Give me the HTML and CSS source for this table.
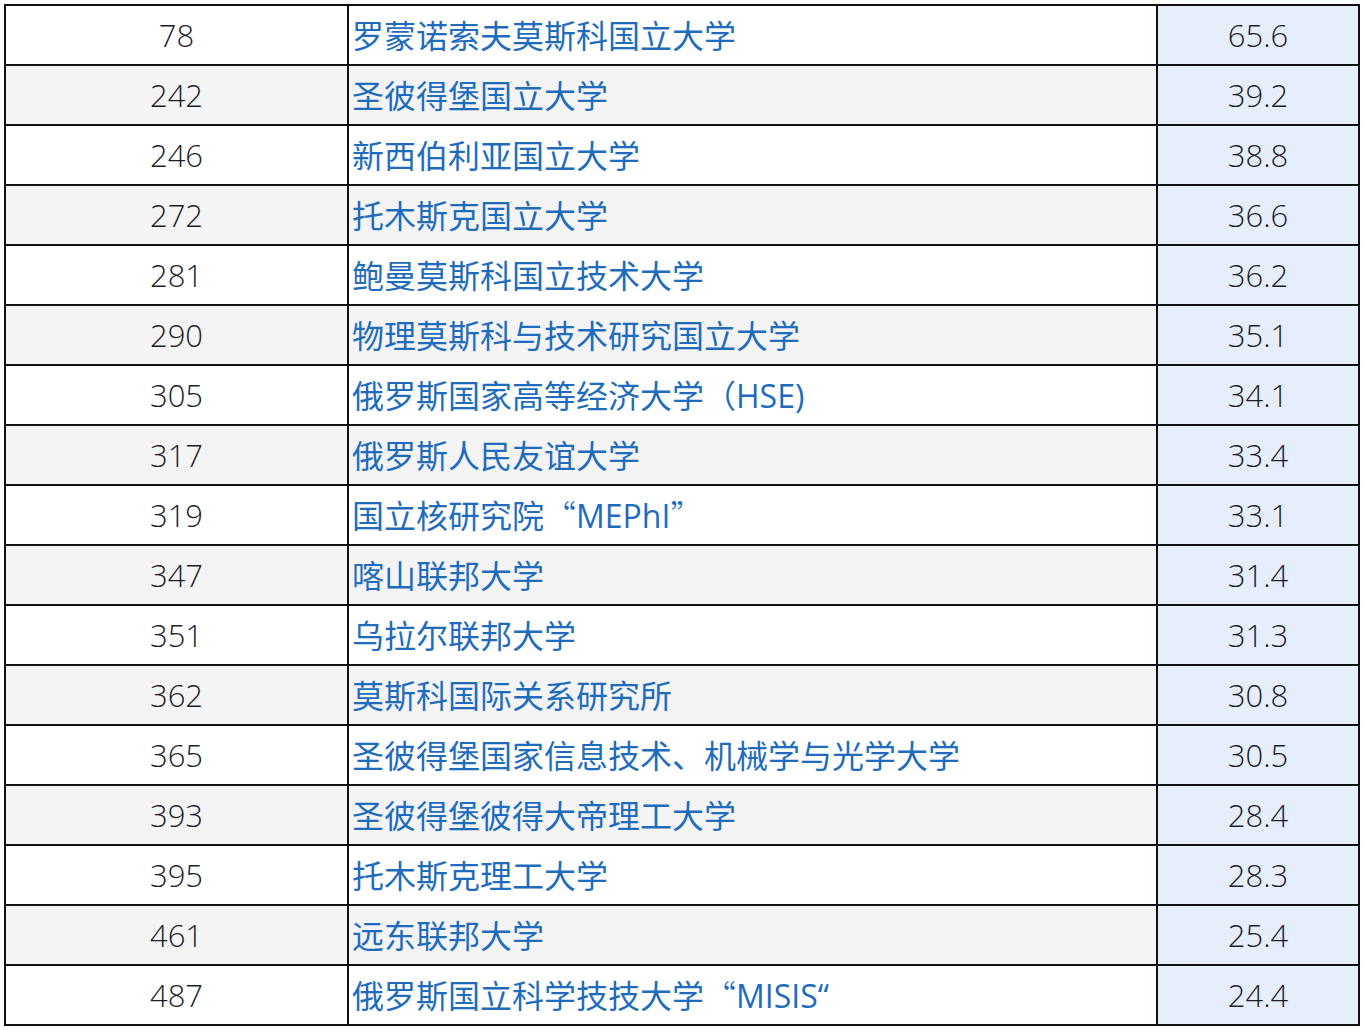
FILE: index.html
```html
<!DOCTYPE html>
<html lang="zh">
<head>
<meta charset="utf-8">
<title>排名</title>
<link rel="stylesheet" href="styles.css">
</head>
<body>
<table class="rank">
  <colgroup><col class="c1"><col class="c2"><col class="c3"></colgroup>
  <tbody>
    <tr><td class="num">78</td><td class="name">罗蒙诺索夫莫斯科国立大学</td><td class="score">65.6</td></tr>
    <tr><td class="num">242</td><td class="name">圣彼得堡国立大学</td><td class="score">39.2</td></tr>
    <tr><td class="num">246</td><td class="name">新西伯利亚国立大学</td><td class="score">38.8</td></tr>
    <tr><td class="num">272</td><td class="name">托木斯克国立大学</td><td class="score">36.6</td></tr>
    <tr><td class="num">281</td><td class="name">鲍曼莫斯科国立技术大学</td><td class="score">36.2</td></tr>
    <tr><td class="num">290</td><td class="name">物理莫斯科与技术研究国立大学</td><td class="score">35.1</td></tr>
    <tr><td class="num">305</td><td class="name">俄罗斯国家高等经济大学（HSE)</td><td class="score">34.1</td></tr>
    <tr><td class="num">317</td><td class="name">俄罗斯人民友谊大学</td><td class="score">33.4</td></tr>
    <tr><td class="num">319</td><td class="name">国立核研究院<span class="q">“</span>MEPhI<span class="q">”</span></td><td class="score">33.1</td></tr>
    <tr><td class="num">347</td><td class="name">喀山联邦大学</td><td class="score">31.4</td></tr>
    <tr><td class="num">351</td><td class="name">乌拉尔联邦大学</td><td class="score">31.3</td></tr>
    <tr><td class="num">362</td><td class="name">莫斯科国际关系研究所</td><td class="score">30.8</td></tr>
    <tr><td class="num">365</td><td class="name">圣彼得堡国家信息技术、机械学与光学大学</td><td class="score">30.5</td></tr>
    <tr><td class="num">393</td><td class="name">圣彼得堡彼得大帝理工大学</td><td class="score">28.4</td></tr>
    <tr><td class="num">395</td><td class="name">托木斯克理工大学</td><td class="score">28.3</td></tr>
    <tr><td class="num">461</td><td class="name">远东联邦大学</td><td class="score">25.4</td></tr>
    <tr><td class="num">487</td><td class="name">俄罗斯国立科学技技大学<span class="q">“</span>MISIS“</td><td class="score">24.4</td></tr>
  </tbody>
</table>
</body>
</html>
```
FILE: styles.css
```css
html, body {
  margin: 0;
  padding: 0;
  background: #ffffff;
}
body {
  padding: 4px 0 0 4px;
  font-family: "Open Sans", "Noto Sans CJK SC", sans-serif;
}
.rank {
  border-collapse: collapse;
  table-layout: fixed;
  width: 1354px;
}
.c1 { width: 343px; }
.c2 { width: 809px; }
.c3 { width: 202px; }
.rank td {
  border: 2px solid #111111;
  height: 57px;
  padding: 1px 0 0 0;
  font-size: 31px;
  font-weight: 300;
  line-height: 57px;
  white-space: nowrap;
  overflow: hidden;
}
.rank tr:nth-child(even) td {
  background: #f4f4f5;
}
.num {
  text-align: center;
  color: #1e1e2a;
}
.rank td.name {
  text-align: left;
  padding-left: 3px;
  color: #1f6cbc;
  font-family: "Open Sans", "Noto Sans CJK SC", sans-serif;
  font-size: 32px;
  font-weight: 400;
}
.q {
  font-family: "Noto Sans CJK SC", sans-serif;
  font-weight: 300;
  line-height: 1;
}
.rank td.score,
.rank tr:nth-child(even) td.score {
  text-align: center;
  color: #1e1e2a;
  background: #e6eefb;
}
```
